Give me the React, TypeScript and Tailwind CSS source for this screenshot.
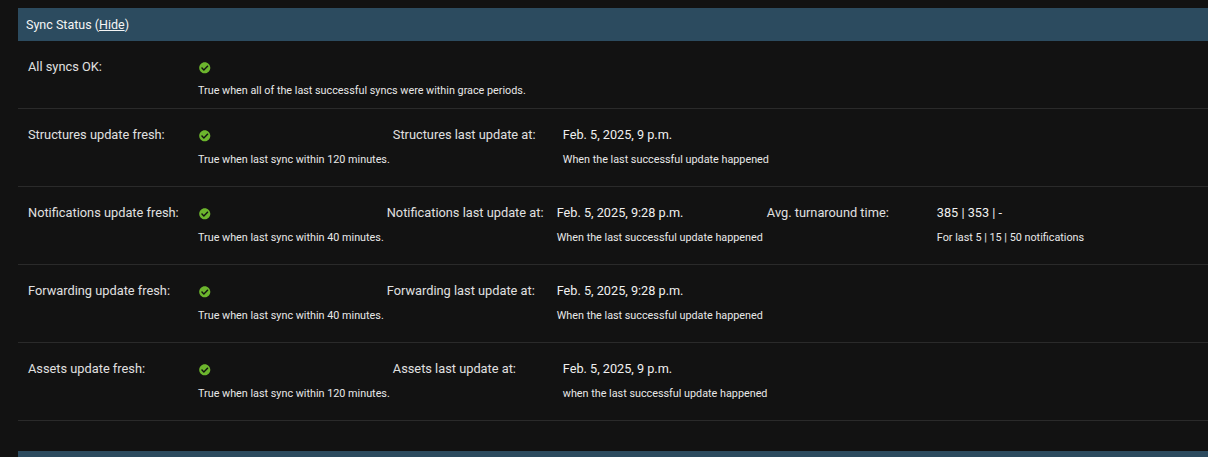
import React from "react";
import { FaCheckCircle } from "react-icons/fa";

interface FieldProps {
  label: string;
  value?: string;
  help: string;
  ok?: boolean;
  helpGap?: string;
  className?: string;
}

const Field = ({ label, value, help, ok, helpGap = "mt-[9px]", className = "" }: FieldProps) => {
  return (
    <div className={`flex shrink-0 ${className}`}>
      <div className="w-[170px] shrink-0 text-[12.8px] leading-[18px] text-[#e0e0e0]">{label}</div>
      <div>
        <div className="flex h-[18px] items-center text-[12.7px] leading-[18px] text-[#f0f0f0]">
          {ok ? <FaCheckCircle className="mt-[2px] ml-[1px] text-[11.5px] text-[#6cb52d]" /> : value}
        </div>
        <div className={`${helpGap} whitespace-nowrap text-[10.8px] leading-[14px] text-[#e8e8e8]`}>{help}</div>
      </div>
    </div>
  );
};

const Row = ({ children, height = "h-[78px]" }: { children: React.ReactNode; height?: string }) => {
  return (
    <div className={`flex gap-[3px] border-b border-[#2a2a2a] pl-[10px] pt-[17px] ${height}`}>{children}</div>
  );
};

const App = () => {
  return (
    <div className="h-[457px] overflow-hidden bg-[#121212] pl-[18px] pt-[8px] font-['Roboto','Open_Sans',sans-serif]">
      <div className="flex h-[33px] items-center bg-[#2c4b5f] px-[8px] pt-[2px] text-[12.5px] text-[#f5f5f5]">
        <span className="whitespace-pre">Sync Status (</span>
        <a className="underline">Hide</a>)
      </div>
      <Row height="h-[68px]">
        <Field label="All syncs OK:" ok helpGap="mt-[8px]" help="True when all of the last successful syncs were within grace periods." />
      </Row>
      <Row>
        <Field label="Structures update fresh:" ok help="True when last sync within 120 minutes." />
        <Field label="Structures last update at:" value="Feb. 5, 2025, 9 p.m." help="When the last successful update happened" />
      </Row>
      <Row>
        <Field label="Notifications update fresh:" ok help="True when last sync within 40 minutes." />
        <Field label="Notifications last update at:" value="Feb. 5, 2025, 9:28 p.m." help="When the last successful update happened" />
        <Field className="ml-[1px]" label="Avg. turnaround time:" value="385 | 353 | -" help="For last 5 | 15 | 50 notifications" />
      </Row>
      <Row>
        <Field label="Forwarding update fresh:" ok help="True when last sync within 40 minutes." />
        <Field label="Forwarding last update at:" value="Feb. 5, 2025, 9:28 p.m." help="When the last successful update happened" />
      </Row>
      <Row>
        <Field label="Assets update fresh:" ok help="True when last sync within 120 minutes." />
        <Field label="Assets last update at:" value="Feb. 5, 2025, 9 p.m." help="when the last successful update happened" />
      </Row>
      <div className="mt-[30px] h-[33px] bg-[#2c4b5f]" />
    </div>
  );
};

export default App;
